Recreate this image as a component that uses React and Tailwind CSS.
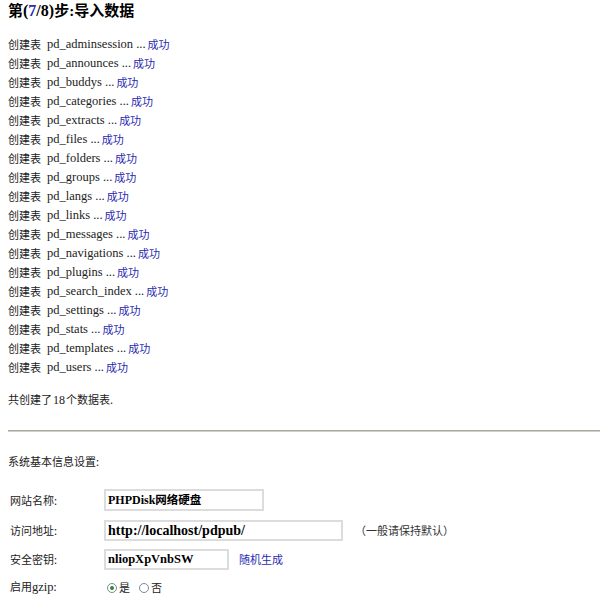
import React from "react";

const tables = [
  "pd_adminsession","pd_announces","pd_buddys","pd_categories","pd_extracts","pd_files","pd_folders","pd_groups","pd_langs","pd_links","pd_messages","pd_navigations","pd_plugins","pd_search_index","pd_settings","pd_stats","pd_templates","pd_users",
];

const serif = { fontFamily: '"Liberation Serif", "Noto Sans CJK SC", serif' };
const cjk = { fontFamily: '"Noto Sans CJK SC", sans-serif' };

function Radio({ checked }) {
  return (
    <span className="inline-flex items-center justify-center w-[10px] h-[10px] rounded-full border border-[#7a8a9a] bg-white">
      {checked && <span className="w-[4px] h-[4px] rounded-full bg-[#2c8a2c]" />}
    </span>
  );
}

export default function App() {
  return (
    <div className="w-[600px] h-[600px] overflow-hidden bg-white text-[#222]" style={cjk}>
      <div className="pl-2">
        <h1 className="text-[15px] font-bold leading-[18px] h-[18px] pt-[1px] text-black" style={cjk}>
          第<span className="text-[16px]" style={serif}>(<span className="text-[#2a2ab0]">7</span>/8)</span>步<span style={serif}>:</span>导入数据
        </h1>
        <div className="mt-[17px]">
          {tables.map((t) => (
            <div key={t} className="h-[19px] leading-[19px] text-[11px] flex items-center whitespace-pre">
              <span>创建表</span>
              <span className="ml-[6px] text-[12.5px]" style={serif}>{t} ...</span>
              <span className="ml-[2px] text-[#2a2ab0]">成功</span>
            </div>
          ))}
        </div>
        <div className="mt-[13px] h-[19px] leading-[19px] text-[11px]">
          共创建了<span className="text-[12px] mx-[1px]" style={serif}>18</span>个数据表.
        </div>
      </div>
      <div className="ml-2 mt-[21px] h-[2px] bg-[#a9a99c] border-b border-[#d0d0c8]" />
      <div className="pl-2 text-[11px]">
        <div className="mt-[20px] h-[19px] leading-[19px]">系统基本信息设置:</div>
        <div className="mt-[14px] pl-[2px]">
          <div className="h-[30px] flex items-center">
            <span className="w-[94px]">网站名称:</span>
            <div className="w-[160px] h-[22px] border-2 border-[#dcdcdc] flex items-center px-[2px] text-black font-bold">
              <span className="text-[12px]" style={serif}>PHPDisk</span>
              <span className="text-[11.5px]">网络硬盘</span>
            </div>
          </div>
          <div className="h-[30px] flex items-center">
            <span className="w-[94px]">访问地址:</span>
            <div className="w-[239px] h-[21px] border-2 border-[#dcdcdc] flex items-center px-[2px] text-[14px] font-bold text-black" style={serif}>http://localhost/pdpub/</div>
            <span className="ml-[12px] text-[#333]">（一般请保持默认）</span>
          </div>
          <div className="h-[29px] flex items-center">
            <span className="w-[94px]">安全密钥:</span>
            <div className="w-[125px] h-[21px] border-2 border-[#dcdcdc] flex items-center px-[2px] text-[12.5px] font-bold text-black" style={serif}>nliopXpVnbSW</div>
            <span className="ml-[10px] text-[#2a2ab0]">随机生成</span>
          </div>
          <div className="h-[27px] flex items-center">
            <span className="w-[94px]">启用<span style={serif} className="text-[12.5px]">gzip</span>:</span>
            <span className="ml-[3px] flex items-center gap-[2px]"><Radio checked />是</span>
            <span className="ml-[9px] flex items-center gap-[2px]"><Radio />否</span>
          </div>
        </div>
      </div>
    </div>
  );
}
